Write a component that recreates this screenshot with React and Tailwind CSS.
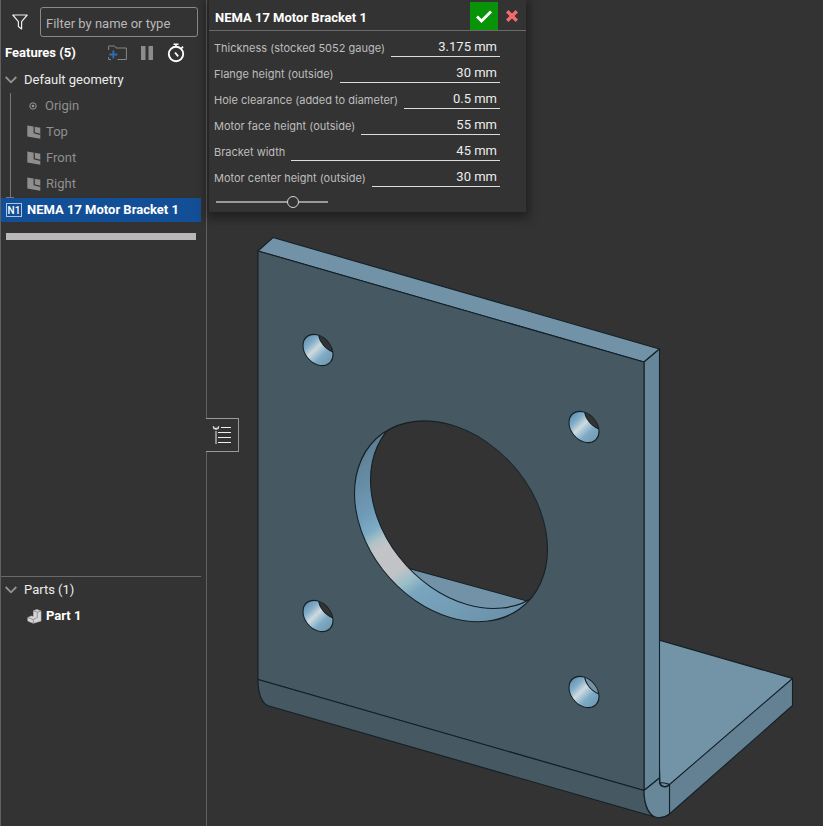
import { useState } from 'react'

const planes = ['Top', 'Front', 'Right']

const params = [
  { id: 'thickness', label: 'Thickness (stocked 5052 gauge)', value: '3.175 mm' },
  { id: 'flange', label: 'Flange height (outside)', value: '30 mm' },
  { id: 'clearance', label: 'Hole clearance (added to diameter)', value: '0.5 mm' },
  { id: 'face', label: 'Motor face height (outside)', value: '55 mm' },
  { id: 'width', label: 'Bracket width', value: '45 mm' },
  { id: 'center', label: 'Motor center height (outside)', value: '30 mm' },
]

const holes = [
  { id: 'h1', x: 318, y: 350 },
  { id: 'h2', x: 584, y: 427 },
  { id: 'h3', x: 318, y: 616 },
  { id: 'h4', x: 584, y: 692, flange: true },
]

const FilterIcon = () => (
  <svg width="16" height="16" viewBox="0 0 16 16" fill="none" stroke="#eee" strokeWidth="1.2" strokeLinejoin="round">
    <path d="M.8 1h14.4L9.6 7.6V15l-3.200-2.500V7.6z" />
  </svg>
)

const FolderIcon = () => (
  <svg width="19" height="16" viewBox="0 0 19 16" fill="none">
    <path d="M.6 5V1h6l1.5 2h10.3v11.5H9.5M.6 12v2.5H3" stroke="#858585" />
    <path d="M5.3 5.5v8M1.3 9.5h8" stroke="#2f6db5" strokeWidth="1.8" />
  </svg>
)

const PauseIcon = () => (
  <svg width="12" height="14" viewBox="0 0 12 14" fill="#8c8c8c">
    <path d="M0 0h4.500v14H0zM7.500 0H12v14H7.500z" />
  </svg>
)

const StopwatchIcon = () => (
  <svg width="18" height="20" viewBox="0 0 18 20" fill="none" stroke="#fff">
    <circle cx="9" cy="11" r="7.2" strokeWidth="1.9" />
    <path d="M6.5 1.2h5M9 1v3M14.2 5.6l1.8-2" strokeWidth="1.6" />
    <path d="M8 9.5l3.2 3.8" strokeWidth="1.8" />
  </svg>
)

const Chevron = () => (
  <svg width="12" height="8" viewBox="0 0 12 8" fill="none" stroke="#959595" strokeWidth="1.8">
    <path d="M.7 1l5.3 5.3L11.3 1" />
  </svg>
)

const OriginIcon = () => (
  <svg width="8" height="8" viewBox="0 0 8 8" fill="none" stroke="#999">
    <circle cx="4" cy="4" r="3.2" />
    <circle cx="4" cy="4" r="1.3" fill="#999" stroke="none" />
  </svg>
)

const PlaneIcon = () => (
  <svg width="14" height="14" viewBox="0 0 14 14">
    <path d="M.3.5l13 2.2v11L.3 11.5z" fill="#8e8e8e" />
    <path d="M7.2 1.5v6.3l6.2 1.5" fill="none" stroke="#333" strokeWidth="1.2" />
  </svg>
)

const PartIcon = () => (
  <svg width="15" height="15" viewBox="0 0 15 15" strokeLinejoin="round">
    <path d="M6.5 1.8L10 .5l4 1.5v10L6.3 14.3.8 12V8.5L4.5 7l2 .6z" fill="#d5d5d5" stroke="#bbb" strokeWidth=".6" />
    <path d="M6.5 1.8l3.8 1.4v5.4l-4 1.9L.8 8.5M10.3 3.2L14 2M6.3 10.5v3.8" fill="none" stroke="#777" strokeWidth=".7" />
  </svg>
)

const ListIcon = () => (
  <svg width="20" height="20" viewBox="0 0 20 20" fill="none">
    <path d="M4 6v13" stroke="#8f8f8f" strokeWidth="2" />
    <path d="M1.3 1.2L2 3.5h4l.7-2.3M4 3.5v1.5" stroke="#ddd" strokeWidth="1.4" />
    <path d="M9 2.5h10M6 7.5h13M6 12.5h13M6 17.5h13" stroke="#eee" />
  </svg>
)

const Model = () => (
  <svg
    className="block h-screen w-full"
    viewBox="207 0 616 826"
    preserveAspectRatio="xMinYMin slice"
    role="img"
    aria-label="NEMA 17 Motor Bracket 1"
    stroke="#142027"
    strokeWidth="1.1"
    strokeLinejoin="round"
  >
    <defs>
      <linearGradient id="bore" gradientUnits="userSpaceOnUse" x1="375" y1="440" x2="500" y2="622">
        <stop offset="0" stopColor="#5d7f94" />
        <stop offset=".25" stopColor="#6f9ab6" />
        <stop offset=".33" stopColor="#7dabc6" />
        <stop offset=".38" stopColor="#adc2c6" />
        <stop offset=".42" stopColor="#c4c4c8" />
        <stop offset=".55" stopColor="#c1c3c5" />
        <stop offset=".61" stopColor="#9cbfc9" />
        <stop offset=".67" stopColor="#7aa5bf" />
        <stop offset="1" stopColor="#6b92aa" />
      </linearGradient>
      <linearGradient id="drill" gradientUnits="userSpaceOnUse" x1="-13" y1="-10" x2="11" y2="15">
        <stop offset="0" stopColor="#6796b3" />
        <stop offset=".2" stopColor="#86b0ca" />
        <stop offset=".4" stopColor="#d0dade" />
        <stop offset=".52" stopColor="#a9c6d5" />
        <stop offset=".68" stopColor="#7eaac5" />
        <stop offset="1" stopColor="#7098b0" />
      </linearGradient>
      <clipPath id="boreFront">
        <circle r="96.5" transform="matrix(1 .289 0 1 451 521.3)" />
      </clipPath>
      <clipPath id="boreBack">
        <circle r="96.5" transform="matrix(1 .289 0 1 467 508)" />
      </clipPath>
      <clipPath id="drillFront">
        <circle r="15" transform="matrix(1 .289 0 1 0 0)" />
      </clipPath>
    </defs>

    {/* flange */}
    <path d="M655 639l137.500 39.500v27L669.500 814 655 800z" fill="#648193" />
    <path d="M655 639l137.500 39.500L669.500 784.500 660 783z" fill="#7393a7" />
    <path d="M669.500 784.500V814" />

    {/* plate */}
    <path d="M258 251l15-13.500L659.500 349 644 362z" fill="#7192a7" />
    <path d="M644 362l15.500-13v429l-15.500 12.500z" fill="#668699" />
    <path d="M258 251l386 111v428.500l-386-111z" fill="#465861" />

    {/* bend */}
    <path d="M258 679.500l386 111c0 14 4 24 11 26.500L269 706c-7-2-11-12-11-26.500z" fill="#465861" />
    <path
      d="M644 790.500l15.500-12.500v5c1 3 3 4 5.500 4 2 0 3.500-1 4.500-2.500V814c-4 3-8 4-12 3.500-8-1-13.500-12-13.500-27z"
      fill="#688899"
    />
    <path d="M660 783c3-.5 6 0 9.500 1.500-3 3-8 3-9.500-1.500z" fill="#6b8a9c" />

    {/* motor bore */}
    <g clipPath="url(#boreFront)">
      <path d="M350 415h205v212H350z" fill="url(#bore)" stroke="none" />
      <g clipPath="url(#boreBack)">
        <path d="M350 400h215v230H350z" fill="#333" />
        <path d="M380 560.500L560 610v30H380z" fill="#7192a7" />
      </g>
      <circle r="96.5" transform="matrix(1 .289 0 1 467 508)" fill="none" />
    </g>
    <circle r="96.5" transform="matrix(1 .289 0 1 451 521.3)" fill="none" />

    {holes.map((hole) => (
      <g key={hole.id} transform={`translate(${hole.x} ${hole.y})`}>
        <g clipPath="url(#drillFront)">
          <path d="M-20-20h40v40h-40z" fill="url(#drill)" stroke="none" />
          <circle r="15" transform="matrix(1 .289 0 1 15.5 -13)" fill={hole.flange ? '#7393a7' : '#333'} />
        </g>
        <circle r="15" transform="matrix(1 .289 0 1 0 0)" fill="none" />
      </g>
    ))}
  </svg>
)

const Sidebar = () => (
  <aside className="flex h-screen w-[207px] shrink-0 flex-col border-x border-[#606060] pr-[5px]">
    <div className="flex items-center gap-3 pt-[7px] pr-[3px] pl-[11px]">
      <button aria-label="Filter">
        <FilterIcon />
      </button>
      <input
        type="text"
        aria-label="Filter by name or type"
        placeholder="Filter by name or type"
        className="h-[30px] min-w-0 flex-1 rounded-[3px] border border-[#8a8a8a] bg-transparent px-[5px] pt-0.5 text-[13px] placeholder:text-[#b8b8b8] focus:outline-none"
      />
    </div>

    <div className="flex h-[30px] items-center pt-0.5 pl-1">
      <h2 className="flex-1 text-[13px] font-bold text-white">Features (5)</h2>
      <div className="flex items-center gap-3.5 pr-4">
        <button aria-label="Add folder">
          <FolderIcon />
        </button>
        <button aria-label="Pause">
          <PauseIcon />
        </button>
        <button aria-label="Regeneration times">
          <StopwatchIcon />
        </button>
      </div>
    </div>

    <button className="flex h-[26px] items-center gap-[7px] pl-1 text-[13px] text-[#ececec]">
      <Chevron />
      Default geometry
    </button>
    <ul className="ml-[9px] border-l border-[#777] text-[13px] text-[#8f8f8f]">
      <li className="flex h-[26px] items-center gap-2 pl-[18px]">
        <OriginIcon />
        Origin
      </li>
      {planes.map((name) => (
        <li key={name} className="flex h-[26px] items-center gap-[5px] pl-4">
          <PlaneIcon />
          {name}
        </li>
      ))}
    </ul>
    <div className="ml-[5px] h-px w-2 bg-[#777]" />
    <button className="flex h-6 items-center gap-[5px] bg-[#134f97] pl-[5px] text-[13px] font-bold whitespace-nowrap text-white">
      <span className="flex h-[14px] w-4 items-center justify-center border border-[#a9c3e2] text-[10px] font-medium">
        N1
      </span>
      NEMA 17 Motor Bracket 1
    </button>
    <div className="mt-[11px] mr-[5px] ml-[5px] h-[7px] bg-[#b9b7b8]" />

    <section className="mt-auto h-[250px] border-t border-[#6a6a6a]">
      <button className="flex h-[26px] items-center gap-[7px] pl-1 text-[13px] text-[#ececec]">
        <Chevron />
        Parts (1)
      </button>
      <div className="flex h-[26px] items-center gap-1 pl-[26px] text-[13px] font-bold text-white">
        <PartIcon />
        Part 1
      </div>
    </section>
  </aside>
)

const FeatureDialog = () => {
  const [slider, setSlider] = useState(71)

  return (
    <form className="absolute top-0 left-[2px] w-[317px] bg-[#333] pb-1 shadow-[0_3px_10px_3px_rgba(0,0,0,0.4)]">
      <div className="flex h-[31px] items-end border-b border-[#6a6a6a]">
        <h1 className="flex-1 pb-[3px] pl-1.5 text-[13px] font-bold text-white">NEMA 17 Motor Bracket 1</h1>
        <button type="button" aria-label="Accept" className="flex h-7 w-7 items-center justify-center bg-[#089308]">
          <svg width="16" height="13" viewBox="0 0 16 13" fill="none" stroke="#fff" strokeWidth="2.8">
            <path d="M1 6.5L5.500 11 15 1.500" />
          </svg>
        </button>
        <button type="button" aria-label="Cancel" className="flex h-7 w-7 items-center justify-center">
          <svg width="12" height="12" viewBox="0 0 12 12" fill="none" stroke="#f26b6b" strokeWidth="3.4">
            <path d="M1.2 1.2l9.6 9.6M10.8 1.2l-9.6 9.6" />
          </svg>
        </button>
      </div>
      <div className="pr-[26px] pl-[5px]">
        {params.map((p) => (
          <div key={p.id} className="flex h-[26px] items-end gap-1.5">
            <label
              htmlFor={p.id}
              className="pb-px font-[Inter,sans-serif] text-[11px] leading-4 whitespace-nowrap text-[#bdbdbd]"
            >
              {p.label}
            </label>
            <input
              id={p.id}
              type="text"
              defaultValue={p.value}
              className="h-5 min-w-0 flex-1 border-b border-[#dcdcdc] bg-transparent pr-[3px] text-right text-[13px] text-[#ececec] focus:outline-none"
            />
          </div>
        ))}
        <input
          type="range"
          aria-label="Motor center height"
          value={slider}
          onChange={(e) => setSlider(e.target.value)}
          className="mt-[9px] ml-0.5 block h-3 w-28 appearance-none bg-transparent [&::-webkit-slider-runnable-track]:h-0.5 [&::-webkit-slider-runnable-track]:bg-[#999] [&::-webkit-slider-thumb]:-mt-[5px] [&::-webkit-slider-thumb]:size-3 [&::-webkit-slider-thumb]:appearance-none [&::-webkit-slider-thumb]:rounded-full [&::-webkit-slider-thumb]:border [&::-webkit-slider-thumb]:border-[#d5d5d5] [&::-webkit-slider-thumb]:bg-[#333]"
        />
      </div>
    </form>
  )
}

const App = () => (
  <div className="flex min-h-screen overflow-hidden bg-[#333] font-[Roboto,'Liberation_Sans',sans-serif]">
    <Sidebar />
    <main className="relative min-w-0 flex-1">
      <Model />
      <FeatureDialog />
      <button
        aria-label="Feature list"
        className="absolute top-[418px] -left-px flex h-[34px] w-[33px] items-center justify-center border border-l-0 border-[#999] bg-[#333]"
      >
        <ListIcon />
      </button>
    </main>
  </div>
)

export default App
